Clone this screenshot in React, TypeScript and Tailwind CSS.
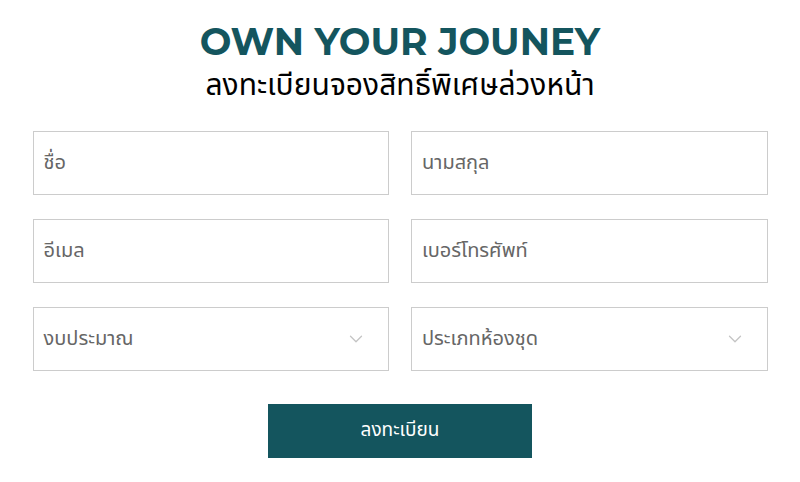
import { ChevronDown } from 'lucide-react'

const thai = "font-['Noto_Sans_Thai','Noto_Sans','Liberation_Sans',sans-serif]"

function Field({ label, select }: { label: string; select?: boolean }) {
  return (
    <div className="flex h-[64px] items-center justify-between border border-[#cccccc] bg-white pl-[10px] pr-[21px]">
      <span className={`${thai} text-[20px] text-[#666666]`}>{label}</span>
      {select && <ChevronDown size={22} strokeWidth={1.4} className="text-[#c4c4c4]" />}
    </div>
  )
}

export default function App() {
  return (
    <div className="flex min-h-[482px] w-[800px] flex-col items-center bg-white pt-[19px]">
      <h1 className="font-['Montserrat','Lato',sans-serif] text-[37.5px] font-bold leading-[46px] text-[#14555e]">
        OWN YOUR JOUNEY
      </h1>
      <p className={`${thai} mt-[2px] text-[30px] leading-[38px] text-black`}>
        ลงทะเบียนจองสิทธิ์พิเศษล่วงหน้า
      </p>
      <div className="mt-[26px] grid w-[735px] grid-cols-2 gap-x-[22px] gap-y-[24px]">
        <Field label="ชื่อ" />
        <Field label="นามสกุล" />
        <Field label="อีเมล" />
        <Field label="เบอร์โทรศัพท์" />
        <Field label="งบประมาณ" select />
        <Field label="ประเภทห้องชุด" select />
      </div>
      <button className={`${thai} mt-[33px] h-[54px] w-[264px] bg-[#14555e] text-[19px] text-white`}>
        ลงทะเบียน
      </button>
    </div>
  )
}
